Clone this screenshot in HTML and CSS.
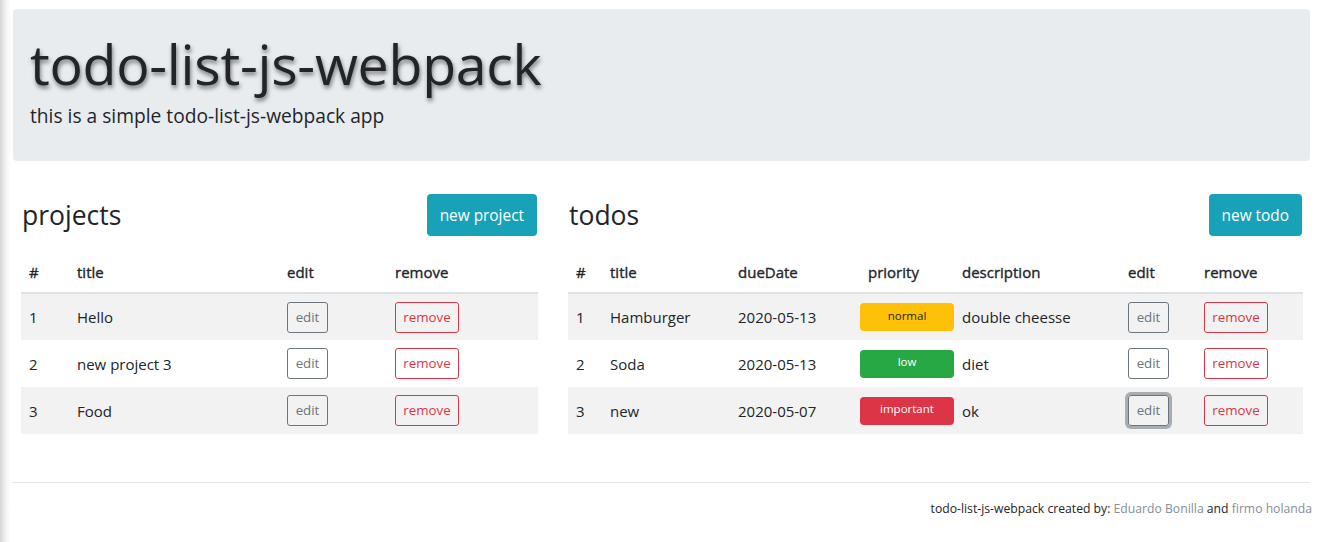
FILE: index.html
```html
<!DOCTYPE html>
<html lang="en">
<head>
<meta charset="utf-8">
<title>todo-list-js-webpack</title>
<link rel="stylesheet" href="styles.css">
</head>
<body>
<div class="page">
  <header class="jumbotron">
    <h1 class="title">todo-list-js-webpack</h1>
    <p class="lead">this is a simple todo-list-js-webpack app</p>
  </header>

  <main class="content">
    <section class="panel">
      <div class="panel-head">
        <h3 class="panel-title">projects</h3>
        <button class="btn-info">new project</button>
      </div>
      <table class="table projects">
        <colgroup>
          <col class="p-num"><col class="p-title"><col class="p-edit"><col class="p-remove">
        </colgroup>
        <thead>
          <tr><th>#</th><th>title</th><th>edit</th><th>remove</th></tr>
        </thead>
        <tbody>
          <tr class="odd"><td>1</td><td>Hello</td><td><button class="btn-edit">edit</button></td><td><button class="btn-remove">remove</button></td></tr>
          <tr><td>2</td><td>new project 3</td><td><button class="btn-edit">edit</button></td><td><button class="btn-remove">remove</button></td></tr>
          <tr class="odd"><td>3</td><td>Food</td><td><button class="btn-edit">edit</button></td><td><button class="btn-remove">remove</button></td></tr>
        </tbody>
      </table>
    </section>

    <section class="panel">
      <div class="panel-head">
        <h3 class="panel-title">todos</h3>
        <button class="btn-info">new todo</button>
      </div>
      <table class="table todos">
        <colgroup>
          <col class="t-num"><col class="t-title"><col class="t-date"><col class="t-prio"><col class="t-desc"><col class="t-edit"><col class="t-remove">
        </colgroup>
        <thead>
          <tr><th>#</th><th>title</th><th>dueDate</th><th class="th-prio">priority</th><th>description</th><th>edit</th><th>remove</th></tr>
        </thead>
        <tbody>
          <tr class="odd"><td>1</td><td>Hamburger</td><td>2020-05-13</td><td class="td-prio"><span class="badge warning">normal</span></td><td class="td-desc">double cheesse</td><td><button class="btn-edit">edit</button></td><td><button class="btn-remove">remove</button></td></tr>
          <tr><td>2</td><td>Soda</td><td>2020-05-13</td><td class="td-prio"><span class="badge success">low</span></td><td class="td-desc">diet</td><td><button class="btn-edit">edit</button></td><td><button class="btn-remove">remove</button></td></tr>
          <tr class="odd"><td>3</td><td>new</td><td>2020-05-07</td><td class="td-prio"><span class="badge danger">important</span></td><td class="td-desc">ok</td><td><button class="btn-edit focused">edit</button></td><td><button class="btn-remove">remove</button></td></tr>
        </tbody>
      </table>
    </section>
  </main>

  <footer class="footer">
    <p class="credits">todo-list-js-webpack created by: <a href="#">Eduardo Bonilla</a> and <a href="#">firmo holanda</a></p>
  </footer>
</div>
</body>
</html>
```
FILE: styles.css
```css
html {
  background: linear-gradient(to right, #d6d6d6 0, #f4f4f4 6px, #ffffff 11px);
  min-height: 100%;
}
body {
  margin: 0;
  font-family: "Open Sans", "Noto Sans", "Liberation Sans", sans-serif;
  color: #212529;
}
.page {
  padding: 9px 13px 0 13px;
}
.jumbotron {
  background: #e9ecef;
  border-radius: 4px;
  height: 152px;
  box-sizing: border-box;
  padding: 22px 17px 0 17px;
}
.title {
  margin: 0;
  font-size: 55.5px;
  font-weight: 400;
  line-height: 66px;
  letter-spacing: -0.3px;
  text-shadow: 1px 3px 4px rgba(0, 0, 0, 0.5);
}
.lead {
  margin: 6px 0 0 0;
  font-size: 19.2px;
  line-height: 26px;
}
.content {
  display: grid;
  grid-template-columns: 517px 1fr;
  column-gap: 30px;
  padding: 33px 7px 0 8px;
}
.panel-head {
  display: flex;
  justify-content: space-between;
  align-items: center;
  height: 42px;
}
.panel-title {
  margin: 0 0 0 1px;
  font-size: 26.5px;
  font-weight: 400;
  line-height: 32px;
}
.btn-info {
  height: 42px;
  padding: 0 13px;
  border: 0;
  border-radius: 4px;
  background: #17a2b8;
  color: #fff;
  font-family: inherit;
  font-size: 15.4px;
  margin-right: 1px;
}
.table {
  width: 100%;
  border-collapse: collapse;
  table-layout: fixed;
  margin-top: 16px;
  font-size: 15px;
}
.table th {
  text-align: left;
  font-weight: 400;
  -webkit-text-stroke: 0.35px currentColor;
  padding: 8px 8px 8px 8px;
  line-height: 24px;
  border-bottom: 2px solid #dee2e6;
}
.table td {
  height: 47px;
  box-sizing: border-box;
  padding: 0 8px;
  vertical-align: middle;
  line-height: 24px;
}
.table tr.odd td {
  background: #f2f2f2;
}
.p-num { width: 48px; }
.p-title { width: 210px; }
.p-edit { width: 108px; }

.t-num { width: 34px; }
.t-title { width: 128px; }
.t-date { width: 122px; }
.t-prio { width: 102px; }
.t-desc { width: 166px; }
.t-edit { width: 76px; }

.table th.th-prio { padding-left: 16px; }
.table td.td-prio { padding: 0 0 0 8px; }
.table td.td-desc { padding-left: 8px; }

.btn-edit, .btn-remove {
  height: 31px;
  padding: 0 7px;
  border-radius: 3px;
  background: transparent;
  font-family: inherit;
  font-size: 13.3px;
  line-height: 29px;
  display: block;
}
.btn-edit {
  width: 41px;
  border: 1px solid #6c757d;
  color: #6c757d;
}
.btn-remove {
  width: 64px;
  border: 1px solid #dc3545;
  color: #dc3545;
}
.btn-edit.focused {
  box-shadow: 0 0 0 3px rgba(108, 117, 125, 0.55);
}
.badge {
  display: flex;
  align-items: center;
  justify-content: center;
  width: 94px;
  height: 28px;
  box-sizing: border-box;
  padding-bottom: 3px;
  border-radius: 4px;
  font-size: 11.5px;
  font-weight: 500;
}
.badge.warning { background: #ffc107; color: #212529; }
.badge.success { background: #28a745; color: #fff; }
.badge.danger { background: #dc3545; color: #fff; }

.footer {
  margin-top: 48px;
  border-top: 1px solid #e6e6e6;
  margin-left: -1px;
}
.credits {
  margin: 0;
  text-align: right;
  padding: 16px 0 0 0;
  font-size: 12.2px;
  line-height: 20px;
  margin-right: -2px;
}
.credits a {
  color: #868e96;
  text-decoration: none;
}
```
